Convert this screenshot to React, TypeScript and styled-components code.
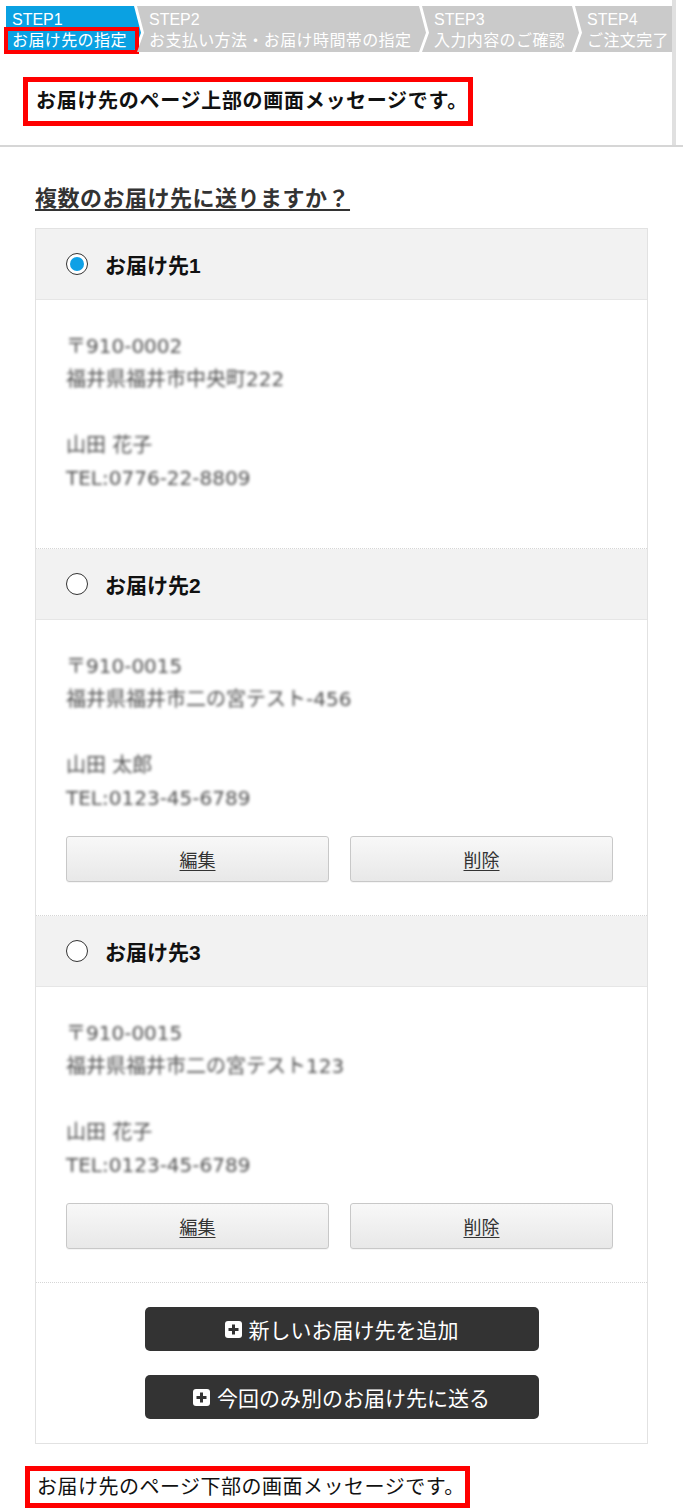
import styled, { createGlobalStyle } from "styled-components";

const GlobalStyle = createGlobalStyle`
  body {
    margin: 0;
    background: #fff;
    color: #222;
    font-family: "Liberation Sans", "Noto Sans CJK JP", sans-serif;
  }
`;

interface Address {
  id: number;
  lines: string[];
  editable: boolean;
}

const addresses: Address[] = [
  {
    id: 1,
    lines: ["〒910-0002", "福井県福井市中央町222", "", "山田 花子", "TEL:0776-22-8809"],
    editable: false,
  },
  {
    id: 2,
    lines: ["〒910-0015", "福井県福井市二の宮テスト-456", "", "山田 太郎", "TEL:0123-45-6789"],
    editable: true,
  },
  {
    id: 3,
    lines: ["〒910-0015", "福井県福井市二の宮テスト123", "", "山田 花子", "TEL:0123-45-6789"],
    editable: true,
  },
];

const steps = [
  { num: "STEP1", name: "お届け先の指定", width: 135 },
  { num: "STEP2", name: "お支払い方法・お届け時間帯の指定", width: 289 },
  { num: "STEP3", name: "入力内容のご確認", width: 157 },
  { num: "STEP4", name: "ご注文完了" },
];

const Page = styled.div`
  width: 683px;
`;

const TopArea = styled.div`
  border-bottom: 2px solid #d6d6d6;
`;

const Header = styled.header`
  width: 672px;
  border-right: 4px solid #e0e0e0;
  padding: 6px 0 19px;
`;

const StepBar = styled.ol`
  display: flex;
  list-style: none;
  margin: 0 0 25px 6px;
  padding: 0;
  height: 46px;
`;

// chevron shape: tip on the right, notch on the left
const stepShape = (first: boolean, last: boolean) => {
  const right = last
    ? "100% 0, 100% 100%"
    : "calc(100% - 7px) 0, 100% 58%, calc(100% - 7px) 100%";
  const left = first ? "0 100%" : "0 100%, 7px 58%";
  return `polygon(0 0, ${right}, ${left})`;
};

const Step = styled.li<{ $active?: boolean; $first: boolean; $last: boolean; $width?: number }>`
  position: relative;
  isolation: isolate;
  flex: ${(p) => (p.$width ? `0 0 ${p.$width}px` : "1 1 auto")};
  box-sizing: border-box;
  margin-left: ${(p) => (p.$first ? 0 : -4)}px;
  padding: 3px 0 0 ${(p) => (p.$first ? 6 : 12)}px;
  color: #fff;
  font-size: 16px;
  line-height: 21px;
  white-space: nowrap;

  &::before {
    content: "";
    position: absolute;
    inset: 0;
    z-index: -1;
    background: ${(p) => (p.$active ? "#0aa1e2" : "#cacaca")};
    clip-path: ${(p) => stepShape(p.$first, p.$last)};
  }
`;

const StepNum = styled.div``;

const StepName = styled.div<{ $marked?: boolean }>`
  letter-spacing: 0.4px;
  ${(p) =>
    p.$marked &&
    `
    width: fit-content;
    margin: 1px 0 0 -4px;
    padding: 0 8px 0 4px;
    line-height: 19px;
    outline: 4px solid #f00;
  `}
`;

const Notice = styled.p<{ $strong?: boolean }>`
  width: fit-content;
  margin: ${(p) => (p.$strong ? "0 0 0 23px" : "22px 0 0 25px")};
  border: 5px solid #f00;
  padding: ${(p) => (p.$strong ? "0 0 0 8px" : "0 0 0 7px")};
  color: #111;
  font-size: 20px;
  letter-spacing: ${(p) => (p.$strong ? 0.7 : 0.5)}px;
  line-height: ${(p) => (p.$strong ? 39 : 32)}px;
  font-weight: ${(p) => (p.$strong ? 700 : 400)};
`;

const Main = styled.main`
  padding: 37px 35px 0;
`;

const Title = styled.h2`
  margin: 0 0 14px;
  color: #333;
  font-size: 22px;
  line-height: 30px;
  font-weight: 700;
  letter-spacing: 0.5px;
  text-decoration: underline;
  text-decoration-thickness: 2px;
  text-underline-offset: 3px;
`;

const Card = styled.section`
  border: 1px solid #e2e2e2;
`;

const Item = styled.div`
  & + & {
    border-top: 1px dotted #d6d6d6;
  }
`;

const ItemHeader = styled.label`
  display: flex;
  align-items: center;
  gap: 17px;
  height: 70px;
  padding-left: 30px;
  background: #f2f2f2;
  border-bottom: 1px solid #e6e6e6;
  cursor: pointer;
`;

const Radio = styled.span<{ $checked?: boolean }>`
  display: grid;
  place-items: center;
  width: 22px;
  height: 22px;
  box-sizing: border-box;
  border: 1.5px solid #333;
  border-radius: 50%;
  background: #fff;

  &::after {
    content: "";
    width: 14px;
    height: 14px;
    border-radius: 50%;
    background: ${(p) => (p.$checked ? "#0ea0e6" : "transparent")};
  }
`;

const ItemLabel = styled.span`
  color: #111;
  font-size: 21px;
  font-weight: 700;
`;

const ItemBody = styled.div`
  padding: 30px 34px 32px 30px;
`;

// personal details are shown obscured
const AddressBlock = styled.div`
  margin-bottom: 21px;
  color: #505050;
  font-family: "DejaVu Sans", "Noto Sans CJK JP", sans-serif;
  font-size: 20px;
  line-height: 33px;
  filter: blur(1.6px);
`;

const ButtonRow = styled.div`
  display: grid;
  grid-template-columns: 1fr 1fr;
  gap: 21px;
  margin-bottom: 1px;
`;

const LightButton = styled.button`
  height: 46px;
  border: 1px solid #c8c8c8;
  border-radius: 3px;
  background: linear-gradient(#f8f8f8, #e8e8e8);
  box-shadow: 0 1px 0 rgba(0, 0, 0, 0.04);
  color: #333;
  font-family: inherit;
  font-size: 18px;
  text-decoration: underline;
  text-underline-offset: 3px;
  cursor: pointer;
`;

const Footer = styled.div`
  display: flex;
  flex-direction: column;
  align-items: center;
  gap: 24px;
  padding: 24px 0;
  border-top: 1px dotted #d6d6d6;
`;

const DarkButton = styled.button`
  display: flex;
  align-items: center;
  justify-content: center;
  gap: 7px;
  width: 394px;
  height: 44px;
  border: none;
  border-radius: 5px;
  background: #333;
  color: #fff;
  font-family: inherit;
  font-size: 21px;
  cursor: pointer;
`;

function PlusBox() {
  return (
    <svg width="17" height="17" viewBox="0 0 17 17" aria-hidden="true">
      <rect width="17" height="17" rx="3" fill="#fff" />
      <path d="M8.5 3.5v10M3.5 8.5h10" stroke="#333" strokeWidth="3" />
    </svg>
  );
}

export default function App() {
  return (
    <Page>
      <GlobalStyle />
      <TopArea>
        <Header>
          <StepBar>
            {steps.map((s, i) => (
              <Step
                key={s.num}
                $active={i === 0}
                $first={i === 0}
                $last={i === steps.length - 1}
                $width={s.width}
              >
                <StepNum>{s.num}</StepNum>
                <StepName $marked={i === 0}>{s.name}</StepName>
              </Step>
            ))}
          </StepBar>
          <Notice $strong>お届け先のページ上部の画面メッセージです。</Notice>
        </Header>
      </TopArea>

      <Main>
        <Title>複数のお届け先に送りますか？</Title>
        <Card>
          {addresses.map((a, i) => (
            <Item key={a.id}>
              <ItemHeader>
                <Radio $checked={i === 0} />
                <ItemLabel>お届け先{a.id}</ItemLabel>
              </ItemHeader>
              <ItemBody>
                <AddressBlock>
                  {a.lines.map((line, n) => (
                    <div key={n}>{line || "\u00a0"}</div>
                  ))}
                </AddressBlock>
                {a.editable && (
                  <ButtonRow>
                    <LightButton type="button">編集</LightButton>
                    <LightButton type="button">削除</LightButton>
                  </ButtonRow>
                )}
              </ItemBody>
            </Item>
          ))}
          <Footer>
            <DarkButton type="button">
              <PlusBox />
              新しいお届け先を追加
            </DarkButton>
            <DarkButton type="button">
              <PlusBox />
              今回のみ別のお届け先に送る
            </DarkButton>
          </Footer>
        </Card>
      </Main>

      <Notice>お届け先のページ下部の画面メッセージです。</Notice>
    </Page>
  );
}
